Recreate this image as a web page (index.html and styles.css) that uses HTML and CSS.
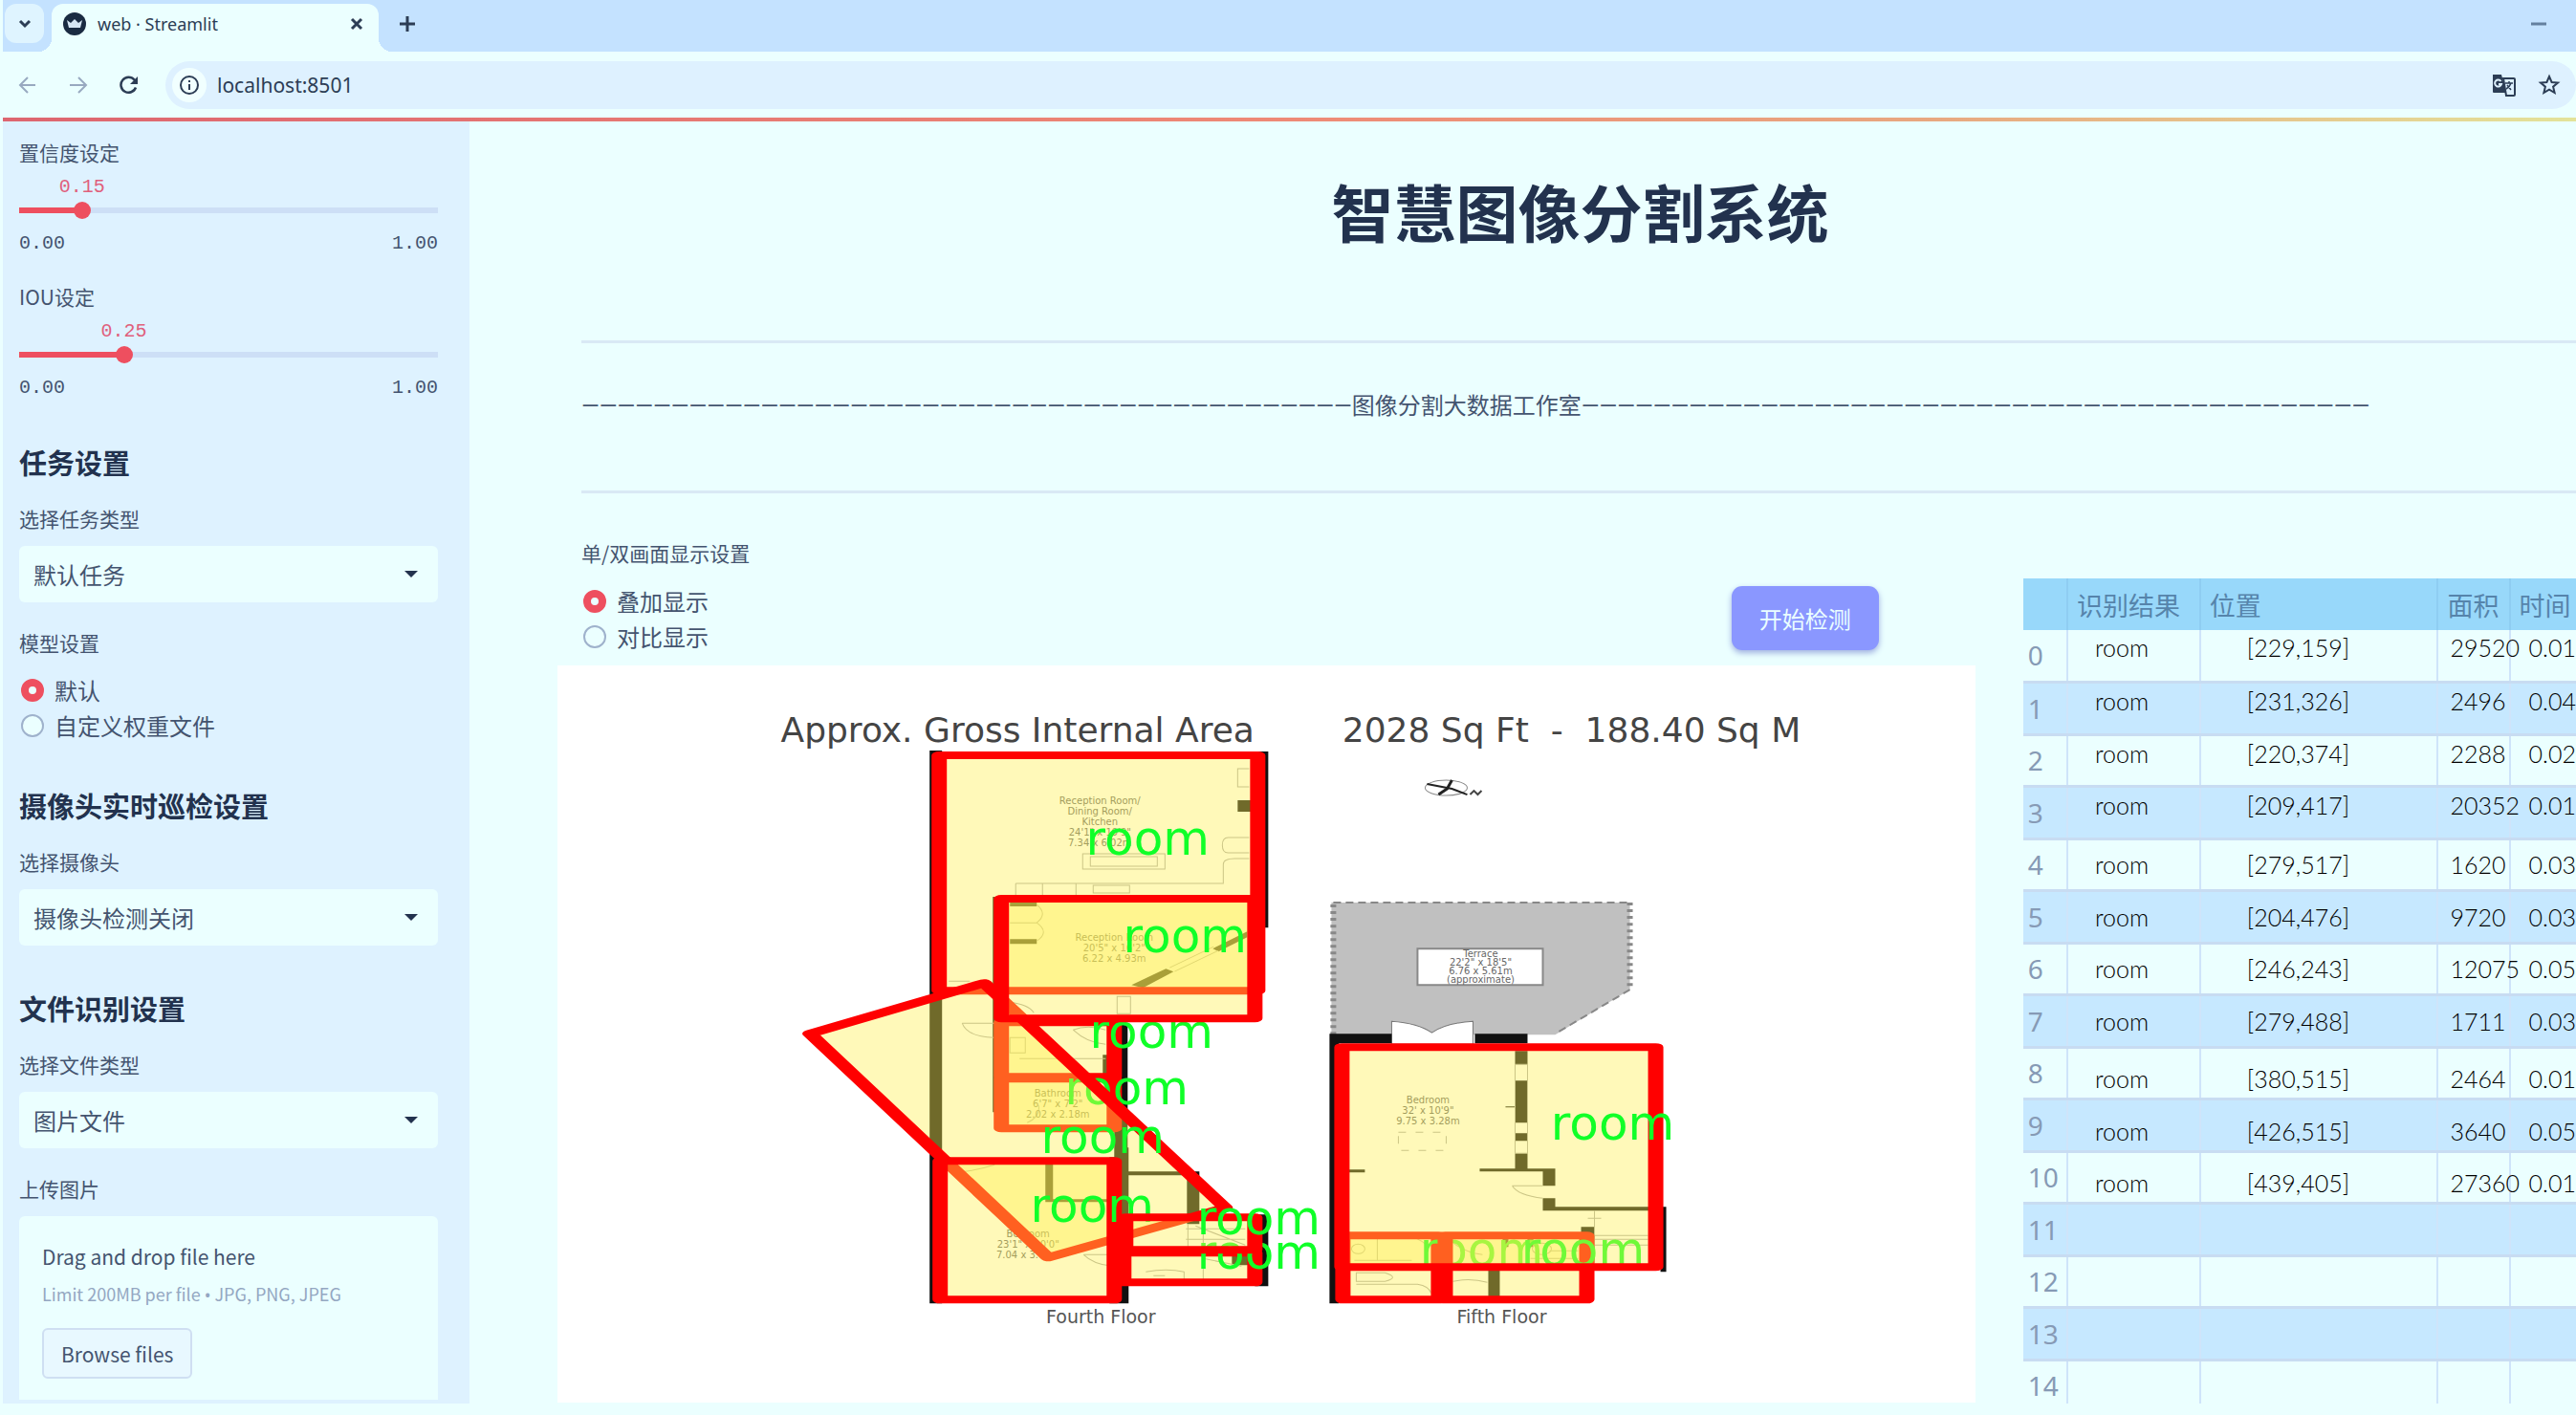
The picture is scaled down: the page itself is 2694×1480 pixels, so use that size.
FILE: index.html
```html
<!DOCTYPE html>
<html lang="zh-CN">
<head>
<meta charset="utf-8">
<title>web · Streamlit</title>
<link rel="stylesheet" href="styles.css">
</head>
<body>
<header class="browser">
  <div class="tabstrip">
    <button class="tab-menu" aria-label="Search tabs"><svg width="16" height="12" viewBox="0 0 16 12"><path d="M3 3l5 5 5-5" fill="none" stroke="currentColor" stroke-width="3"/></svg></button>
    <div class="tab">
      <svg width="24" height="24" viewBox="0 0 24 24"><circle cx="12" cy="12" r="12" fill="#1a2b42"/><path d="M4 8l4 3 4-4 4 4 4-3-2 8H6z" fill="#d6e6f4"/></svg>
      <span class="tab-title">web · Streamlit</span>
      <button class="icon-btn" aria-label="Close tab"><svg width="14" height="14" viewBox="0 0 14 14"><path d="M2 2l10 10M12 2L2 12" stroke="currentColor" stroke-width="3"/></svg></button>
    </div>
    <button class="icon-btn new-tab" aria-label="New tab"><svg width="16" height="16" viewBox="0 0 16 16"><path d="M8 0v16M0 8h16" stroke="currentColor" stroke-width="3"/></svg></button>
    <button class="icon-btn minimise" aria-label="Minimise"><svg width="16" height="4" viewBox="0 0 16 4"><path d="M0 2h16" stroke="currentColor" stroke-width="3"/></svg></button>
  </div>
  <div class="toolbar">
    <button class="icon-btn dim" aria-label="Back"><svg width="20" height="20" viewBox="0 0 20 20"><path d="M18 10H3M10 2l-8 8 8 8" fill="none" stroke="currentColor" stroke-width="2"/></svg></button>
    <button class="icon-btn dim" aria-label="Forward"><svg width="20" height="20" viewBox="0 0 20 20"><path d="M1 10h16M10 2l8 8-8 8" fill="none" stroke="currentColor" stroke-width="2"/></svg></button>
    <button class="icon-btn" aria-label="Reload"><svg width="20" height="20" viewBox="0 0 20 20"><path d="M17 12.500A8 8 0 1 1 15.500 4.500L18 7" fill="none" stroke="currentColor" stroke-width="2.500"/><path d="M19 1v8h-8z" fill="currentColor"/></svg></button>
    <div class="address">
      <button class="site-info" aria-label="Site information"><svg width="20" height="20" viewBox="0 0 20 20"><circle cx="10" cy="10" r="9" fill="none" stroke="currentColor" stroke-width="2"/><path d="M10 9v6M10 5v2" stroke="currentColor" stroke-width="2"/></svg></button>
      <input class="url" type="text" value="localhost:8501" aria-label="Address">
      <button class="icon-btn" aria-label="Translate"><svg width="26" height="26" viewBox="0 0 26 26"><path d="M12 6h11a1 1 0 0 1 1 1v16a1 1 0 0 1-1 1h-8z" fill="none" stroke="currentColor" stroke-width="2"/><path d="M1 2h9l5 19H2a1 1 0 0 1-1-1z" fill="currentColor"/><path d="M9.500 9A3.500 3.500 0 1 0 10 12H7" fill="none" stroke="#dff2ff" stroke-width="2"/><path d="M14 11h8M18 9v2M20 11c-1 3-3 5-5 6M16 13l4 5" fill="none" stroke="currentColor" stroke-width="1.500"/></svg></button>
      <button class="icon-btn" aria-label="Bookmark"><svg width="24" height="24" viewBox="0 0 24 24"><path d="M12 3l2.600 6 6.400.5-4.900 4.200 1.500 6.300L12 16.600 6.400 20l1.500-6.300L3 9.500 9.400 9z" fill="none" stroke="currentColor" stroke-width="2"/></svg></button>
    </div>
  </div>
  <div class="rainbow"></div>
</header>

<div class="workspace">
  <aside class="sidebar">
    <div class="slider" style="--v:15%">
      <label for="conf">置信度设定</label>
      <output for="conf">0.15</output>
      <div class="track"><input id="conf" type="range" min="0" max="1" step="0.01" value="0.15"></div>
      <div class="limits"><span>0.00</span><span>1.00</span></div>
    </div>
    <div class="slider" style="--v:25%">
      <label for="iou">IOU设定</label>
      <output for="iou">0.25</output>
      <div class="track"><input id="iou" type="range" min="0" max="1" step="0.01" value="0.25"></div>
      <div class="limits"><span>0.00</span><span>1.00</span></div>
    </div>

    <h2>任务设置</h2>
    <div class="field">
      <label class="caption" for="task">选择任务类型</label>
      <div class="select"><select id="task"><option>默认任务</option></select></div>
    </div>
    <fieldset class="field">
      <legend>模型设置</legend>
      <label class="radio"><input type="radio" name="model" checked>默认</label>
      <label class="radio"><input type="radio" name="model">自定义权重文件</label>
    </fieldset>

    <h2>摄像头实时巡检设置</h2>
    <div class="field">
      <label class="caption" for="camera">选择摄像头</label>
      <div class="select"><select id="camera"><option>摄像头检测关闭</option></select></div>
    </div>

    <h2>文件识别设置</h2>
    <div class="field">
      <label class="caption" for="kind">选择文件类型</label>
      <div class="select"><select id="kind"><option>图片文件</option></select></div>
    </div>
    <div class="field">
      <label class="caption" for="browse">上传图片</label>
      <div class="uploader">
        <p class="drop">Drag and drop file here</p>
        <p class="hint">Limit 200MB per file <span class="dot">•</span> JPG, PNG, JPEG</p>
        <button id="browse" class="browse">Browse files</button>
      </div>
    </div>
  </aside>

  <main>
    <h1>智慧图像分割系统</h1>
    <hr>
    <p class="studio">———————————————————————————————————————————图像分割大数据工作室————————————————————————————————————————————</p>
    <hr>
    <div class="board">
      <section>
        <div class="controls">
          <fieldset class="view">
            <legend>单/双画面显示设置</legend>
            <label class="radio"><input type="radio" name="view" checked>叠加显示</label>
            <label class="radio"><input type="radio" name="view">对比显示</label>
          </fieldset>
          <button class="start">开始检测</button>
        </div>
        <svg class="plan" viewBox="583 696 1482 771">
          <text class="area" x="1064" y="776">Approx. Gross Internal Area</text>
          <text class="area" x="1643" y="776">2028 Sq Ft  -  188.40 Sq M</text>

          <!-- compass -->
          <g fill="none" stroke="#888"><ellipse cx="1512" cy="824" rx="22" ry="8"/><path d="M1492 820l26 5 16 6" stroke="#222" stroke-width="2"/><path d="M1504 831l9-6 5-9" stroke="#222" stroke-width="3"/><path d="M1537 831l4-4 4 4 4-4" stroke="#444" stroke-width="2"/></g>

          <!-- fourth floor walls -->
          <g fill="#111">
            <path d="M972 785h13v578h-13zM1313 786h13v184h-13zM1165 1070h14v140h-14zM1160 1210h20v153h-20zM1312 1270h14v75h-14zM1172 1200h8v34h-8zM1175 1225h79v4h-79zM1241 1226h13v54h-13zM1093 1216h8v40h-8zM1093 1254h72v3h-72z"/>
            <path d="M1038 938h4v225h-4zM1294 837h14v12h-14zM1056 944h28v4h-28zM1056 982h28v5h-28zM1288 1313h20v10h-20zM1153 1103h6v20h-6z"/>
            <path d="M1183 1030l36-17 8 3-32 17z"/><path d="M1268 992l36-18v6l-30 15z"/>
          </g>
          <g class="thin">
            <path d="M1132 893h86v16h-86zM1140 896h70v10h-70zM1062 924h217v-20q0-6 12-6h15M1062 924v12M1090 924v12M1125 924v12M1143 926h38v8h-38zM1306 876h-22q-6 0-6 8t6 8h22" />
            <path d="M1084 946q12 10 0 19q14 10 0 19M1056 965h28M1223 1012l46-22M1228 1016l46-22M1306 804h-12v19h12M992 1026h22"/>
            <path d="M1006 1070h35M1006 1070q5 14 33 15M1055 1048q20 2 26 11M1056 1085h16v16h-16zM1066 1107h90M1122 1077q15-6 34 0M1122 1077q15 14 34 15"/>
            <path d="M1086 1156q2 12-12 18M995 1226q20 0 45-8M1133 1312h30M1133 1312q10 10 30 12M1242 1280v26M1258 1280v26M1240 1285h62M1240 1296h62M1250 1282l52 20M1198 1330q22-4 40 0v8M1206 1334h12M1258 1316l40 8M1258 1324v14M1168 1042h14v18h-14z"/>
          </g>
          <g class="note">
            <text x="1150" y="841">Reception Room/</text><text x="1150" y="852">Dining Room/</text><text x="1150" y="863">Kitchen</text><text x="1150" y="874">24'1" x 19'9"</text><text x="1150" y="885">7.34 x 6.02m</text>
            <text x="1165" y="984">Reception Room</text><text x="1165" y="995">20'5" x 16'2"</text><text x="1165" y="1006">6.22 x 4.93m</text>
            <text x="1106" y="1147">Bathroom</text><text x="1106" y="1158">6'7" x 7'2"</text><text x="1106" y="1169">2.02 x 2.18m</text>
            <text x="1075" y="1294">Bedroom</text><text x="1075" y="1305">23'1" x 10'0"</text><text x="1075" y="1316">7.04 x 3.05m</text>
          </g>

          <!-- fifth floor walls -->
          <path d="M1392 944h312v91l-78 47h-234z" fill="#c0c0c0"/>
          <path d="M1394 1082V944M1704 944v91" fill="none" stroke="#888" stroke-width="6" stroke-dasharray="3 4"/>
          <path d="M1394 944h312M1704 1035l-78 46" fill="none" stroke="#888" stroke-width="2" stroke-dasharray="8 5"/>
          <path d="M1455 1092v-24q28 2 42 12q14-10 43-12v24z" fill="#fff" stroke="#777"/>
          <path d="M1482 992h131v38h-131z" fill="#fff" stroke="#888" stroke-width="2"/>
          <g class="note">
            <text x="1548" y="1001">Terrace</text><text x="1548" y="1010">22'2" x 18'5"</text><text x="1548" y="1019">6.76 x 5.61m</text><text x="1548" y="1028">(approximate)</text>
            <text x="1493" y="1154">Bedroom</text><text x="1493" y="1165">32' x 10'9"</text><text x="1493" y="1176">9.75 x 3.28m</text>
          </g>
          <g fill="#111">
            <path d="M1390 1081h65v10h-65zM1542 1081h55v10h-55zM1390 1081h10v282h-10zM1584 1099h13v14h-13zM1584 1130h13v44h-13zM1584 1185h13v8h-13zM1584 1206h13v18h-13zM1547 1222h79v3h-79zM1613 1222h13v18h-13zM1613 1253h13v13h-13zM1613 1262h126v4h-126zM1736 1262h6v68h-6zM1410 1223h17v3h-17zM1653 1283h14v14h-14zM1556 1325h12v36h-12zM1574 1157h10v1h-10zM1571 1292h6v12h-6zM1597 1292h6v12h-6z"/>
          </g>
          <g class="thin">
            <path d="M1584 1113h13v93h-13zM1581 1240h32M1581 1240q6 10 32 13M1667 1266v55M1660 1274h14M1667 1292h56M1667 1296h56M1667 1302h56M1440 1290v28M1416 1318h60M1418 1331h30q16 5 0 9h-30zM1418 1343h64q12 2 14 9M1519 1340q18-4 36 1M1462 1290q20 2 32 14M1520 1300q12 10 30 12M1600 1316h50M1620 1308h30"/>
            <path d="M1462 1184h50v19h-50z" stroke-dasharray="8 10"/>
            <ellipse cx="1420" cy="1306" rx="7" ry="5"/><ellipse cx="1612" cy="1306" rx="10" ry="6"/>
          </g>
          <text class="floor" x="1151" y="1384">Fourth Floor</text>
          <text class="floor" x="1570" y="1384">Fifth Floor</text>

          <!-- detected rooms, each a mask followed by its label -->
          <path class="mask" d="M523.5 1069H582.500V1126H523.5z"/><text class="tag" x="1204" y="1096">room</text>
          <path class="mask" d="M523.5 1128H582.500V1180H523.5z"/><text class="tag" x="1178" y="1155">room</text>
          <path class="mask" d="M491 790H657.500V1036H491z"/><text class="tag" x="1200" y="894">room</text>
          <path class="mask" d="M423.5 1081L514.500 1028 640.500 1263 548 1315z"/><text class="tag" x="1153" y="1206">room</text>
          <path class="mask" d="M523.5 940H656V1065H523.5z"/><text class="tag" x="1239" y="996">room</text>
          <path class="mask" d="M491.500 1214H582.500V1359H491.500z"/><text class="tag" x="1142" y="1278">room</text>
          <path class="mask" d="M587.500 1310H656V1341H587.500z"/><text class="tag" x="1316" y="1327">room</text>
          <path class="mask" d="M588.500 1273H656V1307H588.500z"/><text class="tag" x="1316" y="1291">room</text>
          <path class="mask" d="M702 1292H752V1359H702z"/><text class="tag" x="1549" y="1324">room</text>
          <path class="mask" d="M755.500 1292H829.500V1359H755.500z"/><text class="tag" x="1655" y="1324">room</text>
          <path class="mask" d="M701.500 1095H865.500V1325H701.500z"/><text class="tag" x="1686" y="1192">room</text>
        </svg>
      </section>

      <table class="results">
        <colgroup><col class="c-index"><col class="c-name"><col class="c-place"><col class="c-size"><col class="c-time"></colgroup>
        <thead><tr><th></th><th>识别结果</th><th>位置</th><th>面积</th><th>时间</th></tr></thead>
        <tbody class="upper">
          <tr><th>0</th><td>room</td><td>[229,159]</td><td>29520</td><td>0.01</td></tr>
          <tr><th>1</th><td>room</td><td>[231,326]</td><td>2496</td><td>0.04</td></tr>
          <tr><th>2</th><td>room</td><td>[220,374]</td><td>2288</td><td>0.02</td></tr>
          <tr><th>3</th><td>room</td><td>[209,417]</td><td>20352</td><td>0.01</td></tr>
        </tbody>
        <tbody class="middle">
          <tr><th>4</th><td>room</td><td>[279,517]</td><td>1620</td><td>0.03</td></tr>
          <tr><th>5</th><td>room</td><td>[204,476]</td><td>9720</td><td>0.03</td></tr>
          <tr><th>6</th><td>room</td><td>[246,243]</td><td>12075</td><td>0.05</td></tr>
          <tr><th>7</th><td>room</td><td>[279,488]</td><td>1711</td><td>0.03</td></tr>
        </tbody>
        <tbody class="lower">
          <tr><th>8</th><td>room</td><td>[380,515]</td><td>2464</td><td>0.01</td></tr>
          <tr><th>9</th><td>room</td><td>[426,515]</td><td>3640</td><td>0.05</td></tr>
          <tr><th>10</th><td>room</td><td>[439,405]</td><td>27360</td><td>0.01</td></tr>
          <tr><th>11</th><td></td><td></td><td></td><td></td></tr>
          <tr><th>12</th><td></td><td></td><td></td><td></td></tr>
          <tr><th>13</th><td></td><td></td><td></td><td></td></tr>
          <tr><th>14</th><td></td><td></td><td></td><td></td></tr>
        </tbody>
      </table>
    </div>
  </main>
</div>
</body>
</html>
```
FILE: styles.css
```css
:root {
  --page: #ebffff;
  --panel: #def2ff;
  --ink: #44546f;
  --heading: #22324e;
  --red: #ee4f5f;
}

* { box-sizing: border-box; }

body {
  margin: 0;
  padding: 0 0 13px 3px;
  min-height: 100vh;
  display: flex;
  flex-direction: column;
  overflow-x: hidden;
  background: var(--page);
  color: var(--ink);
  font: 24px/30px "Noto Sans CJK SC", sans-serif;
}

button, input, select { font: inherit; color: inherit; }
button { border: 0; padding: 0; background: none; cursor: pointer; }
svg { display: block; }
h1, h2, p, fieldset { margin: 0; padding: 0; border: 0; }

/* browser window */
.browser { font-family: "Noto Sans", sans-serif; color: #2c3d55; }
.tabstrip { display: flex; height: 54px; padding: 4px 31px 0 2px; background: #c4e2ff; }
.tab-menu {
  display: grid;
  place-items: center;
  width: 41px;
  height: 41px;
  border-radius: 12px;
  background: #dff4ff;
}
.tab {
  position: relative;
  display: flex;
  align-items: center;
  gap: 12px;
  width: 342px;
  margin-left: 8px;
  padding: 0 16px 8px 12px;
  border-radius: 12px 12px 0 0;
  background: var(--page);
}
.tab::before, .tab::after {
  content: "";
  position: absolute;
  bottom: 0;
  width: 14px;
  height: 14px;
}
.tab::before { right: 100%; background: radial-gradient(circle at 0 0, transparent 14px, var(--page) 14px); }
.tab::after { left: 100%; background: radial-gradient(circle at 100% 0, transparent 14px, var(--page) 14px); }
.tab-title { flex: 1; font-size: 18px; }
.icon-btn { display: grid; place-items: center; }
.new-tab { margin: 0 0 8px 22px; }
.minimise { margin: 0 0 8px auto; color: #64809f; }
.toolbar {
  display: flex;
  align-items: center;
  gap: 33px;
  height: 69px;
  padding: 0 0 0 16px;
}
.dim { color: #98a9c0; }
.address {
  flex: 1;
  display: flex;
  align-items: center;
  gap: 22px;
  height: 50px;
  margin-left: -5px;
  padding: 0 16px 0 7px;
  border-radius: 25px;
  background: #def1ff;
}
.site-info {
  display: grid;
  place-items: center;
  width: 36px;
  height: 36px;
  margin-right: -11px;
  border-radius: 50%;
  background: #f1ffff;
}
.url { flex: 1; min-width: 0; border: 0; padding: 0; background: none; font-size: 21px; }
.rainbow { height: 4px; background: linear-gradient(90deg, #dd6670, #ee8a76 50%, #e8a880 75%, #e3e39a); }

.workspace { flex: 1; display: flex; }

/* sidebar */
.sidebar { width: 488px; flex: none; padding: 17px 33px 0 17px; background: var(--panel); }
.sidebar h2 {
  margin: 45px 0 24px;
  color: var(--heading);
  font-size: 29px;
  line-height: 40px;
  font-weight: 700;
}
.slider > label, .caption, legend { display: block; padding: 0; font-size: 21px; line-height: 30px; }
.slider + .slider { margin-top: 28px; }
.slider output, .limits { font: 20px/24px "Liberation Mono", monospace; }
.slider output {
  display: block;
  width: 48px;
  margin: 10px 0 2px calc(var(--v) - 24px);
  color: #e0607c;
}
.track {
  height: 20px;
  margin-bottom: 13px;
  display: flex;
  background:
    linear-gradient(90deg, var(--red) var(--v), #cddff6 var(--v)) center / 100% 6px no-repeat;
}
.track input {
  appearance: none;
  flex: none;
  width: calc(100% + 18px);
  height: 20px;
  margin: 0 -9px;
  background: none;
}
.track input::-webkit-slider-thumb {
  appearance: none;
  width: 18px;
  height: 18px;
  border-radius: 50%;
  background: var(--red);
}
.limits { display: flex; justify-content: space-between; }

.field + .field { margin-top: 27px; }
.caption { margin-bottom: 14px; }
legend { margin-bottom: 16px; }
.select { display: grid; align-items: center; }
.select > select, .select::after { grid-area: 1 / 1; }
.select select {
  appearance: none;
  width: 100%;
  height: 59px;
  padding: 0 48px 0 15px;
  border: 0;
  border-radius: 6px;
  background: var(--page);
}
.select::after {
  content: "";
  justify-self: end;
  margin-right: 21px;
  border: 7px solid transparent;
  border-top-color: #22324e;
  border-bottom: 0;
  pointer-events: none;
}
.radio { display: flex; align-items: center; gap: 11px; height: 37px; padding-left: 2px; }
.radio input {
  appearance: none;
  width: 24px;
  height: 24px;
  margin: 0;
  border: 2px solid #9fb2cc;
  border-radius: 50%;
  background: var(--page);
}
.radio input:checked { border: 8px solid var(--red); }

.uploader { padding: 27px 24px 22px; border-radius: 6px 6px 0 0; background: var(--page); }
.drop { font-size: 21px; margin-bottom: 9px; }
.hint { font-size: 18px; margin-bottom: 20px; color: #94a7c2; }
.dot { font-family: "Noto Sans", sans-serif; }
.browse {
  height: 53px;
  padding: 0 18px;
  border: 2px solid #cfdff2;
  border-radius: 6px;
  background: #e8f8ff;
  font-size: 21px;
}

/* main area */
main { flex: 1; min-width: 0; padding: 53px 0 0 92px; }
main h1 {
  padding-left: 28px;
  color: var(--heading);
  font-size: 65px;
  line-height: 80px;
  font-weight: 700;
  text-align: center;
}
hr { height: 3px; margin: 96px 0 0 25px; border: 0; background: #d9e9f5; }
.studio {
  margin: 46px 0 0 25px;
  line-height: 40px;
  font-family: Roboto, "Noto Sans CJK SC", sans-serif;
  white-space: nowrap;
}
.studio + hr { margin-top: 68px; }
.board {
  display: grid;
  grid-template-columns: minmax(0, 1482fr) minmax(0, 578fr);
  gap: 50px;
  align-items: start;
  margin-top: 47px;
}
.controls {
  display: flex;
  justify-content: space-between;
  align-items: flex-end;
  padding: 0 101px 12px 25px;
}
.view legend { margin-bottom: 17px; }
.start {
  height: 67px;
  margin-bottom: 4px;
  padding: 0 29px;
  border-radius: 11px;
  background: #8a97ff;
  color: var(--page);
  box-shadow: 0 3px 6px #9fb0e0;
}

.plan { width: 100%; height: auto; background: #fff; font-family: "DejaVu Sans", sans-serif; text-anchor: middle; }
.area { font-size: 36px; fill: #444; white-space: pre; }
.floor { font-size: 19px; fill: #555; }
.note { font-size: 10px; fill: #666; }
.thin { fill: none; stroke: #aaa; stroke-width: 1px; }
.mask {
  transform: scale(2, 1);
  fill: #fff050;
  fill-opacity: 0.4;
  stroke: #f00;
  stroke-width: 8px;
  stroke-linejoin: round;
}
.tag { font-size: 50px; fill: #10ff28; }

/* result table */
.results {
  width: 100%;
  margin-top: 42px;
  border-collapse: collapse;
  table-layout: fixed;
  font-family: Lato, sans-serif;
  color: #000;
}
.c-index { width: 8%; }
.c-name { width: 24%; }
.c-place { width: 43%; }
.c-size { width: 13%; }
.results th, .results td { padding: 0 0 0 12px; text-align: left; font-weight: 400; white-space: nowrap; }
.results th + th, .results td { border-left: 2px solid #cfe4fa; }
.results thead th {
  height: 54px;
  padding-left: 9px;
  background: #98d8fa;
  border-color: #8fcdf2;
  color: #5684ab;
  font: 27px "Noto Sans CJK SC", sans-serif;
}
.results tbody tr { height: 54px; border-top: 3px solid #c8dcf2; }
.results .upper tr:first-child { border-top: 0; }
.results tbody th { padding-left: 5px; color: #869ab5; font: 28px "Noto Sans", sans-serif; }
.results td { font-size: 25px; font-weight: 300; }
.results td:nth-child(2) { padding-left: 28px; }
.results td:nth-child(3) { padding-left: 48px; }
.results td:nth-child(5) { padding-left: 19px; }
.upper td { vertical-align: top; padding-top: 3px; }
.lower td { vertical-align: bottom; padding-bottom: 5px; }
.results tbody tr:nth-child(even) { height: 55px; background: #c6e8ff; }
.results .lower tr:last-child { height: 44px; }
.results .lower tr:last-child th { padding-top: 6px; }
```
